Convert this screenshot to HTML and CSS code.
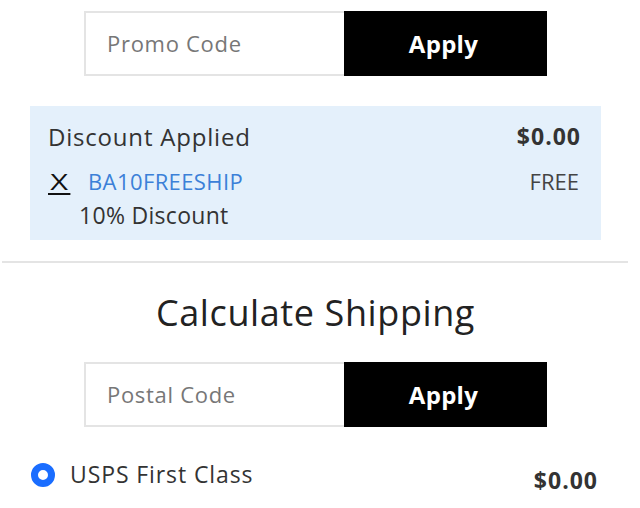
FILE: index.html
```html
<!DOCTYPE html>
<html lang="en">
<head>
    <meta charset="UTF-8">
    <meta name="viewport" content="width=device-width, initial-scale=1.0">
    <title>Cart Summary</title>
    <link rel="stylesheet" href="styles.css">
</head>
<body>
    <div class="cart">
        <form class="code-form">
            <input type="text" placeholder="Promo Code">
            <button type="button">Apply</button>
        </form>

        <div class="discount">
            <div class="discount-row">
                <span class="discount-title">Discount Applied</span>
                <span class="price">$0.00</span>
            </div>
            <div class="discount-row code-row">
                <span><a href="#" class="remove">X</a><span class="code">BA10FREESHIP</span></span>
                <span class="free">FREE</span>
            </div>
            <div class="discount-note">10% Discount</div>
        </div>

        <hr class="divider">

        <h2>Calculate Shipping</h2>
        <form class="code-form postal">
            <input type="text" placeholder="Postal Code">
            <button type="button">Apply</button>
        </form>

        <label class="ship-option">
            <span class="radio"></span>
            <span class="ship-name">USPS First Class</span>
            <span class="price ship-price">$0.00</span>
        </label>
    </div>
</body>
</html>
```

FILE: styles.css
```css
body {
    margin: 0;
    background: #fff;
    font-family: "Open Sans", Arial, sans-serif;
    color: #333;
}

.cart {
    width: 631px;
}

.code-form {
    display: flex;
    width: 463px;
    height: 65px;
    margin: 11px auto 0;
}

.code-form input {
    box-sizing: border-box;
    width: 260px;
    height: 100%;
    border: 2px solid #e4e4e4;
    border-right: none;
    padding: 0 0 2px 21px;
    font-family: inherit;
    font-size: 22px;
    letter-spacing: 0.7px;
    outline: none;
}

.code-form input::placeholder {
    color: #777;
}

.code-form button {
    flex: 1;
    border: none;
    background: #000;
    color: #fff;
    font-family: inherit;
    font-size: 24px;
    font-weight: 700;
    letter-spacing: 0.3px;
    padding: 0 4px 0 0;
    cursor: pointer;
}

.discount {
    box-sizing: border-box;
    height: 134px;
    margin: 30px 30px 0;
    padding: 15px 20px 0 18px;
    background: #e4f0fb;
}

.discount-row {
    display: flex;
    justify-content: space-between;
    align-items: flex-start;
}

.discount-title {
    font-size: 24px;
    letter-spacing: 0.8px;
    line-height: 32px;
}

.price {
    font-size: 23px;
    font-weight: 700;
    letter-spacing: 1px;
    line-height: 30px;
    color: #333;
}

.code-row {
    margin-top: 13px;
    font-size: 22px;
    line-height: 30px;
}

.remove {
    display: inline-block;
    width: 16px;
    margin-right: 24px;
    color: #111;
    font-size: 22px;
    text-align: center;
    text-decoration: none;
    border-bottom: 2px solid #111;
    line-height: 24px;
    transform: scaleX(1.4);
    transform-origin: left;
}

.code {
    color: #3b80d8;
    letter-spacing: 0.4px;
}

.free {
    color: #444;
    margin-right: 2px;
}

.discount-note {
    margin: 4px 0 0 31px;
    font-size: 23px;
    letter-spacing: 0.3px;
    line-height: 30px;
}

.divider {
    height: 2px;
    margin: 21px 3px 0 2px;
    border: none;
    background: #e4e4e4;
}

h2 {
    margin: 28px 0 0;
    text-align: center;
    font-size: 36px;
    font-weight: 400;
    letter-spacing: 0.6px;
    line-height: 44px;
    color: #222;
}

.postal {
    margin-top: 27px;
}

.ship-option {
    display: flex;
    align-items: flex-start;
    margin-top: 32px;
    padding: 0 33px 0 31px;
}

.radio {
    box-sizing: border-box;
    width: 24px;
    height: 24px;
    margin: 4px 15px 0 0;
    border: 7px solid #1a6dff;
    border-radius: 50%;
}

.ship-name {
    flex: 1;
    font-size: 23px;
    letter-spacing: 0.9px;
    line-height: 30px;
}

.ship-price {
    padding-top: 6px;
}
```
